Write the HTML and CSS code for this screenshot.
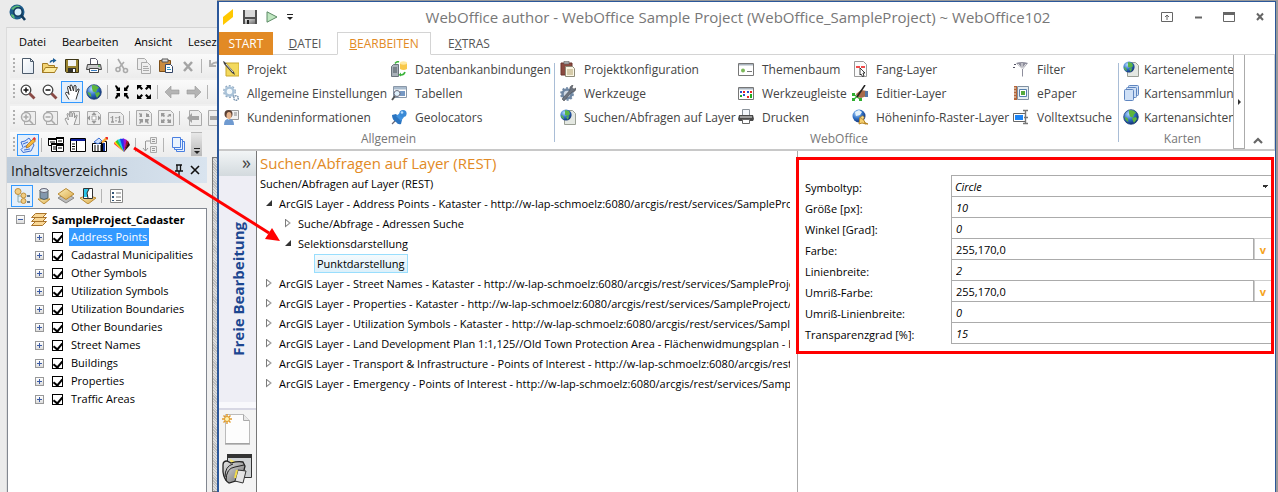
FILE: index.html
```html
<!DOCTYPE html>
<html lang="de">
<head>
  <meta charset="UTF-8">
  <meta name="viewport" content="width=device-width, initial-scale=1.0">
  <title>WebOffice author</title>
  <link rel="stylesheet" href="styles.css">
</head>
<body>

  <!-- Icon definitions -->
  <svg class="defs" aria-hidden="true">
    <defs>
      <radialGradient id="g-globe" cx=".35" cy=".3" r=".8"><stop offset="0" stop-color="#b5dcff"/><stop offset=".5" stop-color="#2f6fc4"/><stop offset="1" stop-color="#0b2566"/></radialGradient>
      <linearGradient id="g-gold" x1="0" y1="0" x2="1" y2="1"><stop offset="0" stop-color="#fdf0b8"/><stop offset="1" stop-color="#d9a84a"/></linearGradient>
      <linearGradient id="g-grey" x1="0" y1="0" x2="1" y2="1"><stop offset="0" stop-color="#e6e6e6"/><stop offset="1" stop-color="#6b6b6b"/></linearGradient>
      <linearGradient id="g-page" x1="0" y1="0" x2="1" y2="1"><stop offset="0" stop-color="#fff"/><stop offset="1" stop-color="#dfe8f2"/></linearGradient>
    </defs>
    <symbol id="i-app" viewBox="0 0 18 18"><circle cx="8" cy="8" r="7.5" fill="#1c5c8c"/><path d="M2 5q4-5 9-3l-2 3-4 1zM2 10l3 1 1 4q-4-2-4-5z" fill="#5cba78"/><circle cx="9" cy="8" r="4.2" fill="#d8eefa" stroke="#123a5c" stroke-width="1.5"/><path d="M12 11l4 5" stroke="#123a5c" stroke-width="2.6"/></symbol>
    <symbol id="i-new" viewBox="0 0 16 16"><path d="M2.5.5h8l3 3v12h-11z" fill="url(#g-page)" stroke="#4b5a6b"/><path d="M10.5.5v3h3" fill="none" stroke="#4b5a6b"/></symbol>
    <symbol id="i-open" viewBox="0 0 16 16"><path d="M.5 14.5v-9h5l1 2h6v7z" fill="#f3d374" stroke="#a27b22"/><path d="M.5 14.5l3-5h12l-3 5z" fill="#fdeb9f" stroke="#a27b22"/><path d="M8 4.500q1-2 3-2" fill="none" stroke="#1b5c96" stroke-width="1.500"/><path d="M11 0l3.500 2.500L11 5z" fill="#1b5c96"/></symbol>
    <symbol id="i-save" viewBox="0 0 16 16"><path d="M1.5 1.5h13v13h-12l-1-1z" fill="#9a8430" stroke="#3c3515"/><path d="M4 2h8v6H4z" fill="#f4f4f4"/><path d="M4 10h8v4H4z" fill="#33312a"/><path d="M9 11h2v3H9z" fill="#fff"/></symbol>
    <symbol id="i-print" viewBox="0 0 16 16"><path d="M4.5 6V.5h5l2 2V6" fill="#fff" stroke="#556"/><path d="M1.5 6.5h13l1 5h-15z" fill="#c9c9c9" stroke="#444"/><path d="M3.5 10.5h9v4h-9z" fill="#fff" stroke="#444"/><path d="M5 12.5h6" stroke="#3b7ec4"/><path d="M12 8h2" stroke="#3a3"/></symbol>
    <symbol id="i-cut" viewBox="0 0 16 16"><g fill="none" stroke="#aaa" stroke-width="1.6"><path d="M4 1l6 10M10 4l-5 6"/><circle cx="11.5" cy="12.5" r="2"/><circle cx="4" cy="11.5" r="2"/></g></symbol>
    <symbol id="i-copy" viewBox="0 0 16 16"><g fill="#eee" stroke="#aaa"><path d="M1.5.5h7l2 2v9h-9z"/><path d="M5.5 4.5h6l3 3v8h-9z"/><path d="M7 8.5h5M7 10.5h6M7 12.5h6"/></g></symbol>
    <symbol id="i-paste" viewBox="0 0 16 16"><path d="M1.5 2.5h11v11h-11z" fill="#c98b3e" stroke="#7c4d16"/><path d="M4 1h6v3H4z" fill="#ddd" stroke="#555"/><path d="M7.5 6.5h5l2 2v6h-7z" fill="#fff" stroke="#346"/><path d="M9 9.5h3M9 11.5h4" stroke="#39c"/></symbol>
    <symbol id="i-del" viewBox="0 0 16 16"><path d="M4 4l8 9M12 4l-8 9" stroke="#a4a4a4" stroke-width="2.5"/></symbol>
    <symbol id="i-undo" viewBox="0 0 16 16"><path d="M2 2v6h6M3 7q5-5 10 0v6" fill="none" stroke="#b0b0b0" stroke-width="2"/></symbol>
    <symbol id="i-zin" viewBox="0 0 16 16"><circle cx="6" cy="6" r="4.8" fill="#fff" stroke="#444" stroke-width="1.3"/><path d="M3.5 6h5M6 3.5v5" stroke="#111" stroke-width="1.5"/><path d="M9.5 9.5l5 5" stroke="#8a4a45" stroke-width="2.8"/></symbol>
    <symbol id="i-zout" viewBox="0 0 16 16"><circle cx="6" cy="6" r="4.8" fill="#fff" stroke="#444" stroke-width="1.3"/><path d="M3.5 6h5" stroke="#111" stroke-width="1.5"/><path d="M9.5 9.5l5 5" stroke="#8a4a45" stroke-width="2.8"/></symbol>
    <symbol id="i-hand" viewBox="0 0 16 16"><path d="M5 15.5L1.500 9.500q0-2 2-1l1.500 2-1.500-7q0-1.500 1.500-1L7 7 6 2q.5-2 2-.5L9.500 7 10 2q1-1.500 2 0v6l2-3q1.500-.5 1 1l-2 6-1 3.500" fill="#fff" stroke="#333"/></symbol>
    <symbol id="i-globe" viewBox="0 0 16 16"><circle cx="8" cy="8" r="7.300" fill="url(#g-globe)" stroke="#1f4178" stroke-width=".8"/><path d="M6 1l4 .5 3 2-2 2-1 3-3-1-1-3zM9 9l4-1 1 2-3 4-1-2zM1.500 8l3 1 1 4q-3-1-4-5z" fill="#5db53c"/></symbol>
    <symbol id="i-in4" viewBox="0 0 16 16"><path d="M1 2l1-1 3 3 1-1v4H2l1-1zM15 2l-1-1-3 3-1-1v4h4l-1-1zM1 14l1 1 3-3 1 1V9H2l1 1zM15 14l-1 1-3-3-1 1V9h4l-1 1z"/></symbol>
    <symbol id="i-out4" viewBox="0 0 16 16"><path d="M1 1h5L4.800 2.200 7 4.500 5.500 6 3.200 3.800 1 6zM15 1h-5l1.200 1.200L9 4.500 10.500 6l2.300-2.200L15 6zM1 15h5l-1.200-1.200L7 11.500 5.500 10l-2.300 2.200L1 10zM15 15h-5l1.200-1.200L9 11.500l1.500-1.500 2.300 2.200L15 10z"/></symbol>
    <symbol id="i-left" viewBox="0 0 16 16"><path d="M1 8l6-6v4h8v4H7v4z" fill="#b4b4b4" stroke="#999" stroke-width=".6"/></symbol>
    <symbol id="i-right" viewBox="0 0 16 16"><path d="M15 8L9 2v4H1v4h8v4z" fill="#b4b4b4" stroke="#999" stroke-width=".6"/></symbol>
    <symbol id="i-select" viewBox="0 0 16 16"><path d="M8 3h7v9H8" fill="#fff" stroke="#111" stroke-width="2"/><path d="M8 2v12" stroke="#111" stroke-width="2"/></symbol>
    <symbol id="i-pzin" viewBox="0 0 16 16"><path d="M4.5 1.5h11v13h-11z" fill="#eee" stroke="#aaa"/><circle cx="6" cy="7" r="4.5" fill="#f2f2f2" stroke="#aaa" stroke-width="1.5"/><path d="M3.5 7h5M6 4.5v5M9 10l4 4" stroke="#aaa" stroke-width="1.6"/></symbol>
    <symbol id="i-pzout" viewBox="0 0 16 16"><path d="M4.5 1.5h11v13h-11z" fill="#eee" stroke="#aaa"/><circle cx="6" cy="7" r="4.5" fill="#f2f2f2" stroke="#aaa" stroke-width="1.5"/><path d="M3.5 7h5M9 10l4 4" stroke="#aaa" stroke-width="1.6"/></symbol>
    <symbol id="i-phand" viewBox="0 0 16 16"><path d="M5.5 1.5h10v13h-10z" fill="#eee" stroke="#aaa"/><path d="M4 15L1 9q1-2 2-.5L4.500 10 3 4q1-1.500 1.500 0L6 7V3q1-1.500 2 0v4l1-4q1-1 1.500 0V8l2-3q1 0 .5 1l-2 6-1 3" fill="#f4f4f4" stroke="#999"/></symbol>
    <symbol id="i-pfull" viewBox="0 0 16 16"><path d="M1.500 1.500h10l3 3v10h-13z" fill="#eee" stroke="#aaa"/><path d="M8 2l2.500 3h-5zM8 14l2.500-3h-5zM1 8l3-2.500v5zM15 8l-3-2.500v5z" fill="#999"/><path d="M6 6h4v4H6z" fill="#fff" stroke="#aaa"/></symbol>
    <symbol id="i-p11" viewBox="0 0 16 16"><path d="M.5 2.5h12l3 3v9H.5z" fill="#eee" stroke="#aaa"/><path d="M4.500 6v6M11.500 6v6M2.500 7.500l2-1M9.500 7.500l2-1M3 12h3M10 12h3M8 7v1.500M8 10v1.500" stroke="#999" stroke-width="1.300"/></symbol>
    <symbol id="i-pin4" viewBox="0 0 16 16"><path d="M.5.5h12l3 3v12H.5z" fill="#eee" stroke="#aaa"/><path d="M3 3h1l1 1 1-1v4H3l1-1zM13 4h-1l-2-1v4h4l-1-1zM3 13l1-1-1-3h4v4l-1-1-2 2zM13 13l-1-1 1-3H9v4l1-1 2 2z" fill="#999"/></symbol>
    <symbol id="i-pout4" viewBox="0 0 16 16"><path d="M.5.5h12l3 3v12H.5z" fill="#eee" stroke="#aaa"/><path d="M3 3h4L6 4l1 2-1 1-2-1-1 1zM13 4h-3l1 1-2 1 1 1 2-1 1 1zM3 13h4l-1-1 1-2-1-1-2 1-1-1zM13 13H9l1-1-1-2 1-1 2 1 1-1z" fill="#999"/></symbol>
    <symbol id="i-pleft" viewBox="0 0 16 16"><path d="M3.500.5h9l3 3v12h-12z" fill="#eee" stroke="#aaa"/><path d="M1 8l5-5v3h7v4H6v3z" fill="#a4a4a4"/></symbol>
    <symbol id="i-pright" viewBox="0 0 16 16"><path d="M.5.5h12v15H.5z" fill="#eee" stroke="#aaa"/><path d="M14 8L9 3v3H2v4h7v3z" fill="#a4a4a4"/></symbol>
    <symbol id="i-edit" viewBox="0 0 16 16"><path d="M1 5l4-1 4-3 5 7-3 6-8 1.500-2-3 2-2z" fill="#d6e5fc" stroke="#3b6fd4"/><path d="M3 7l5-2M4 10l4-2M4 13l6-1" stroke="#3b6fd4"/><path d="M6 11l1-3 6-6 2.500 2-6.500 6z" fill="#f6b93b" stroke="#a86510" stroke-width=".7"/><path d="M12.500 1.500L14.500 0 16 2l-1 1.500z" fill="#e33"/></symbol>
    <symbol id="i-tiles" viewBox="0 0 16 16"><g fill="#fff" stroke="#000"><path d="M.5 1.500h8v7h-8z"/><path d="M8.500.5h7v6h-7z"/><path d="M3.500 6.500h6v8h-6z"/><path d="M8.500 7.500h7v7h-7z"/></g><path d="M0 2h8M8 1h8M3 7h6M8 8h8" stroke="#000" stroke-width="2"/><path d="M2 5h5M10 4h4M5 10h3M5 12h3M10 11h4" stroke="#000"/></symbol>
    <symbol id="i-form" viewBox="0 0 16 16"><path d="M.5 1.500h15v13H.5z" fill="#fff" stroke="#000"/><path d="M1 2h14v2H1z" fill="#0a1a9a"/><path d="M6.500 4v10M2 7h3M2 9.500h3M2 12h3" stroke="#000"/></symbol>
    <symbol id="i-attr" viewBox="0 0 16 16"><path d="M.5 6.500h10v8H.5zM9.500 4.500h5v10h-5z" fill="#fff" stroke="#000"/><path d="M2 9h7M2 11h7M2 13h7" stroke="#000" stroke-dasharray="2 1"/><path d="M12 6v8" stroke="#139" stroke-width="2"/><path d="M2 5l5-4 3 3-4 3z" fill="#cfe0fb" stroke="#3b6fd4"/><path d="M9 5l5-5 2 2-5 4z" fill="#f6a93b"/><path d="M14 0l2 2" stroke="#e22" stroke-width="2"/></symbol>
    <symbol id="i-fan" viewBox="0 0 16 16"><path d="M10 15L0 7l.5-2z" fill="#f33"/><path d="M10 15L.5 6 2 4z" fill="#ffd500"/><path d="M10 15L1.500 4.500 4 2.500z" fill="#32c832"/><path d="M10 15L3.500 3 7 1.500z" fill="#19c5e8"/><path d="M10 15L6 2l4-.5z" fill="#2233f0"/><path d="M10 15L9.500 1.500 13 3z" fill="#a013d3"/><path d="M10 15l2.500-12L15 5z" fill="#a01030"/><path d="M10 15l4.500-10L16 8z" fill="#2a1010"/></symbol>
    <symbol id="i-sort" viewBox="0 0 16 16"><path d="M3.500 4v10M1 11l2.500 3L6 11" fill="none" stroke="#999"/><path d="M4 4h4" stroke="#999"/><path d="M8.500.5h6v6h-6zM8.500 9.500h6v6h-6z" fill="#eee" stroke="#aaa"/><path d="M10 2.500h3M10 4.500h3M10 11.500h3M10 13.500h3" stroke="#999"/></symbol>
    <symbol id="i-stack" viewBox="0 0 16 16"><g fill="#eaf3fe" stroke="#4a7fe0"><path d="M6.500 4.500h8v10h-8z"/><path d="M4.500 2.500h8v10h-8z"/><path d="M2.500.5h8v10h-8z"/></g></symbol>
    <symbol id="i-pin" viewBox="0 0 12 12"><path d="M3 1h6M4 1v6M7.500 1v6M2 7h8M6 7v4" stroke="#111" stroke-width="1.3" fill="none"/></symbol>
    <symbol id="i-x" viewBox="0 0 12 12"><path d="M2 2l8 8M10 2l-8 8" stroke="#111" stroke-width="1.6"/></symbol>
    <symbol id="i-toc1" viewBox="0 0 16 16"><path d="M4 5v9h4M4 8h4" fill="none" stroke="#8aa"/><circle cx="4" cy="3.500" r="3" fill="#f0cd85" stroke="#c08f3c"/><circle cx="9.500" cy="7.500" r="2.500" fill="#f0cd85" stroke="#c08f3c"/><circle cx="9.500" cy="13" r="2.500" fill="#f0cd85" stroke="#c08f3c"/><path d="M13 8h3M13 14h3" stroke="#357" stroke-width="1.500"/></symbol>
    <symbol id="i-toc2" viewBox="0 0 16 16"><path d="M2 11h12l-6 5z" fill="url(#g-gold)" stroke="#b98a34"/><path d="M4 2v8q4 3 8 0V2z" fill="#8398ae" stroke="#566"/><ellipse cx="8" cy="2.500" rx="4" ry="2" fill="#dce6ef" stroke="#667"/></symbol>
    <symbol id="i-toc3" viewBox="0 0 16 16"><path d="M0 10l8-5 8 5-8 5z" fill="#bbb" stroke="#888"/><path d="M0 6l8-5.500L16 6l-8 5.500z" fill="url(#g-gold)" stroke="#b98a34"/></symbol>
    <symbol id="i-toc4" viewBox="0 0 16 16"><path d="M0 10l8-3 8 3-8 6z" fill="url(#g-gold)" stroke="#b98a34"/><path d="M3.500.5h9v10h-9z" fill="#fff" stroke="#333"/><path d="M4 1h5l-2 4 1 4H4z" fill="#2bc5e8"/><path d="M9 1L7 5l1 5" fill="none" stroke="#222"/></symbol>
    <symbol id="i-toc5" viewBox="0 0 16 16"><path d="M2.500 1.500h12v13h-12z" fill="#fff" stroke="#888"/><path d="M4 4h2v2H4zM4 8h2v2H4zM4 12h2v1H4z" fill="#357"/><path d="M8 5h5M8 9h5M8 12.500h5" stroke="#777"/></symbol>
    <symbol id="i-layers" viewBox="0 0 16 16"><g fill="#f9d795" stroke="#a9742c"><path d="M.5 14.500l4-4h11l-4 4z"/><path d="M.5 10.500l4-4h11l-4 4z"/><path d="M.5 6.500l4-4h11l-4 4z"/></g></symbol>
    <symbol id="i-logo" viewBox="0 0 12 16"><path d="M1 8l10-8v8L1 16z" fill="#ffc800"/></symbol>
    <symbol id="i-disk" viewBox="0 0 16 16"><path d="M1 1h14v14H1z" fill="#505050"/><path d="M3 1h10v7H3z" fill="#d9d9d9"/><path d="M3 10h10v5H3z" fill="url(#g-grey)"/><path d="M5 11h2v4H5z" fill="#222"/></symbol>
    <symbol id="i-play" viewBox="0 0 12 12"><path d="M1 .8l10 5.200-10 5.200z" fill="#bfe6c0" stroke="#5d8a66"/></symbol>
    <symbol id="i-more" viewBox="0 0 8 8"><path d="M1 1.500h6" stroke="#222"/><path d="M1 4h6L4 7z" fill="#222"/></symbol>
    <symbol id="i-r1" viewBox="0 0 16 16"><path d="M3 2h13v13H3z" fill="#f3d95c" stroke="#c9a72c"/><path d="M0 0l2 1 9 10 1 3-3-2L1 3z" fill="#444"/><path d="M3 3l7 8" stroke="#ddd"/></symbol>
    <symbol id="i-r2" viewBox="0 0 16 16"><circle cx="6.500" cy="6.500" r="4" fill="#f4f9fc" stroke="#a9c2d8" stroke-width="2.500"/><circle cx="6.500" cy="6.500" r="5.800" fill="none" stroke="#91abc4" stroke-width="1.300" stroke-dasharray="2 1.700"/><circle cx="13" cy="13" r="2.300" fill="#fff" stroke="#7e98b2" stroke-width="1.600" stroke-dasharray="1.500 .7"/></symbol>
    <symbol id="i-r3" viewBox="0 0 16 16"><path d="M6.500 1.500h9v9h-9z" fill="#f3f3f3" stroke="#999"/><path d="M11 4h3M11 6h3" stroke="#888"/><circle cx="5.500" cy="5" r="4" fill="#5b4033"/><ellipse cx="6" cy="6.500" rx="2.500" ry="3.500" fill="#e8b48c"/><path d="M1 16q0-6 4-6l1 1 2-1q3 1 3 6z" fill="#6f9ad0"/></symbol>
    <symbol id="i-r4" viewBox="0 0 16 16"><path d="M.5 5.500l2-2h5v12h-7z" fill="#a8b0b8" stroke="#6a737c"/><path d="M2 7h4M2 9h4M2 11h4" stroke="#4b545c"/><path d="M9 2v6q3.500 2 7 0V2z" fill="#f8c84a"/><ellipse cx="12.500" cy="2" rx="3.500" ry="1.700" fill="#ffe9a0"/><path d="M4 2.500q2-2.500 4-1.500M10 14q3 0 4-3" fill="none" stroke="#3cb43c" stroke-width="1.600"/><path d="M10 11.500v4L7.500 14z" fill="#3cb43c"/></symbol>
    <symbol id="i-r5" viewBox="0 0 16 16"><path d="M2.500 1.500h13v11h-13z" fill="#fff" stroke="#8a98a8"/><path d="M3 2h12v2.500H3z" fill="#a9bbcd"/><path d="M9 6h5v5H9z" fill="#7799c4"/><circle cx="6" cy="8.500" r="3" fill="#dff0fb" stroke="#667"/><path d="M4 11l-3 4" stroke="#555" stroke-width="1.800"/></symbol>
    <symbol id="i-r6" viewBox="0 0 16 16"><path d="M7 9L1 15" stroke="#667" stroke-width="1.200"/><path d="M1 6l4-1 6 6-1 4q-3 1-5-2-4-2-4-7z" fill="#2a74c0"/><path d="M5 7l4-3 4 4-3 4z" fill="#3f92e0"/><circle cx="12" cy="4.500" r="3.600" fill="#3a8ad6"/><circle cx="11" cy="3.500" r="1.300" fill="#b5dcff"/></symbol>
    <symbol id="i-r7" viewBox="0 0 16 16"><path d="M1 2h11v12H1z" fill="#8a4b40" stroke="#6a352c"/><path d="M4 0h5v3H4z" fill="#aaa" stroke="#666" stroke-width=".6"/><path d="M5.500 5.500h7l2 2v8h-9z" fill="#fbf6e4" stroke="#8d8a78"/><path d="M7 9h6M7 11h6M7 13h6" stroke="#b0a070"/></symbol>
    <symbol id="i-r8" viewBox="0 0 16 16"><circle cx="7" cy="9" r="4.500" fill="#cfd9e4" stroke="#6f87a3" stroke-width="2.500"/><circle cx="7" cy="9" r="6" fill="none" stroke="#6f87a3" stroke-width="1.700" stroke-dasharray="2 1.800"/><path d="M2 14l8-9q-1-4 3-5l-1 3 2 1 2-1q0 4-4 4l-8 9z" fill="#6c7480" stroke="#444" stroke-width=".5"/></symbol>
    <symbol id="i-r9" viewBox="0 0 16 16"><path d="M4.500 1.500h8l3 3v11h-11z" fill="#e4e8e2" stroke="#9a9f94"/><circle cx="6" cy="6" r="5.600" fill="url(#g-globe)"/><path d="M5 1l4 1 1 3-2 2-3-1zM6 8l3-1-1 4zM1 6l2 1 1 3q-3-1-3-4z" fill="#5ab548"/></symbol>
    <symbol id="i-r10" viewBox="0 0 16 16"><path d="M.5 2.500h15v12H.5z" fill="#fff" stroke="#777"/><path d="M1 3h14v1.500H1z" fill="#aab4be"/><circle cx="5" cy="9.500" r="2" fill="#7cb85a"/><path d="M9 10.500h5" stroke="#777"/></symbol>
    <symbol id="i-r11" viewBox="0 0 16 16"><path d="M.5 2.500h15v12H.5z" fill="#fff" stroke="#777"/><path d="M1 3h14v1.500H1z" fill="#aab4be"/><path d="M2 6h2v2H2zM5 9h2v2H5zM9 6h2v2H9z" fill="#2a50d0"/><path d="M5 6h2v2H5zM9 11h2v2H9zM12 6h2v2h-2z" fill="#e22"/><path d="M2 10h2v2H2zM12 9h2v4h-2z" fill="#2a2"/></symbol>
    <symbol id="i-r12" viewBox="0 0 16 16"><path d="M4.500 6V.5h7V6" fill="#f4f8fc" stroke="#8a929a"/><path d="M1 6h14l1 4-1 2H1l-1-2z" fill="#4a4a4a"/><path d="M2 8h12" stroke="#eee"/><path d="M4.500 10.500h7v4h-7z" fill="#fff" stroke="#666"/></symbol>
    <symbol id="i-r13" viewBox="0 0 16 16"><path d="M2.500.5h9l3 3v12h-12z" fill="#fbfbfb" stroke="#999"/><path d="M4 6h4M9 6h4" stroke="#e11" stroke-width="1.400"/><path d="M8 7l5 5h-2l1 3-1.500.5L9 13l-1 1z" fill="#fff" stroke="#111" stroke-width=".8"/></symbol>
    <symbol id="i-r14" viewBox="0 0 16 16"><path d="M1 9l7 5M1 15l7-6" stroke="#3db53d" stroke-width="1.500"/><path d="M0 8h3v3H0zM0 13h3v3H0zM7 13h3v3H7z" fill="#2fae2f"/><path d="M4 9l5-4 6 1v5l-6 2-4-1z" fill="#a86a4a"/><path d="M13 6h3v6h-3z" fill="#5577a5"/><path d="M5 12l8-12" stroke="#222" stroke-width="1.500"/></symbol>
    <symbol id="i-r15" viewBox="0 0 16 16"><circle cx="7" cy="7" r="6.500" fill="url(#g-globe)"/><path d="M3 3l4-2 3 2-2 3-4 1z" fill="#e4f2fb"/><path d="M8 8l3 2 3 5-4-1-3 1z" fill="#f5cf70" stroke="#b88728"/><circle cx="10.500" cy="8.500" r="1.600" fill="#f9dd90" stroke="#b88728" stroke-width=".7"/><path d="M12 14l4 1" stroke="#b88728" stroke-width="1.500"/></symbol>
    <symbol id="i-r16" viewBox="0 0 16 16"><path d="M3 2q6-2 12 0l-5 6v7l-1 1V8z" fill="#8e8e9c"/><path d="M5 3l4 5M9 2v6M13 3L9 8" stroke="#eee"/><path d="M0 6h2v1H0zM1 3h2v1H1z" fill="#556"/></symbol>
    <symbol id="i-r17" viewBox="0 0 16 16"><path d="M1 1h3v14H1z" fill="#b5653a"/><path d="M4.500 1.500h11v13h-11z" fill="#e6edf2" stroke="#8090a0"/><path d="M6.500 4.500h7v7h-7z" fill="#fff" stroke="#557fae"/><path d="M8 6h4v4H8z" fill="#55aa3c"/><path d="M1 3h2M1 6h2M1 9h2M1 12h2" stroke="#eed"/></symbol>
    <symbol id="i-r18" viewBox="0 0 16 16"><path d="M.5 4.500h12v8H.5z" fill="#fff" stroke="#666"/><path d="M2 6h8v5H2z" fill="#1c84f5"/><path d="M12.500 2v12M10 1.500h2l.5.5.5-.5h2M10 14.500h5M11 8.500h4" fill="none" stroke="#777" stroke-width="1.400"/></symbol>
    <symbol id="i-r19" viewBox="0 0 16 16"><g fill="#cfe0f6" stroke="#5f86c0"><rect x="5.500" y=".5" width="10" height="10" rx="1"/><rect x="3.500" y="2.500" width="10" height="10" rx="1"/><rect x="1.500" y="4.500" width="9" height="11" rx="1"/></g></symbol>
    <symbol id="i-ribmin" viewBox="0 0 12 12"><path d="M.5 1.500h11v9H.5z" fill="none" stroke="#666"/><path d="M6 9V4M4 6l2-2 2 2" fill="none" stroke="#666"/></symbol>
    <symbol id="i-min" viewBox="0 0 12 12"><path d="M3 6.500h7" stroke="#666" stroke-width="2"/></symbol>
    <symbol id="i-max" viewBox="0 0 12 12"><path d="M.5 1.500h11v9H.5z" fill="none" stroke="#666"/><path d="M0 2.500h12" stroke="#666" stroke-width="3"/></symbol>
    <symbol id="i-close" viewBox="0 0 12 12"><path d="M3 2.500l6 6.500M9 2.500L3 9" stroke="#666" stroke-width="2"/></symbol>
    <symbol id="i-up" viewBox="0 0 12 12"><path d="M2 9l4-4 4 4" fill="none" stroke="#666" stroke-width="2.200"/></symbol>
    <symbol id="i-page" viewBox="0 0 30 34"><path d="M3.500 1.500h18l6 6v23h-24z" fill="#fdfdfd" stroke="#bbb"/><path d="M21.500 1.500v6h6" fill="#e8e8e8" stroke="#aaa"/><path d="M3 31h25" stroke="#888"/><path d="M5 1v10M0 6h10M1.500 2.500l7 7M8.500 2.500l-7 7" stroke="#e09a2c" stroke-width="1.400"/><circle cx="5" cy="6" r="2.500" fill="#fff3b0" stroke="#e09a2c"/></symbol>
    <symbol id="i-folders" viewBox="0 0 30 34"><path d="M5.500 3.500h24v23h-24z" fill="#cfd2d4" stroke="#333"/><path d="M5 3h25v4H5z" fill="#333"/><path d="M8 8l6 3-5 4z" fill="#f5e36a"/><path d="M1 14q0-4 4-4l4 2q7-2 12-1l2 4-3 13-13 4q-5-3-6-11z" fill="url(#g-grey)" stroke="#222" stroke-width="1.300"/><path d="M4 30q0-13 9-14l9-2M3 26q0-11 8-13" fill="none" stroke="#222"/><path d="M16 19l8 1-3 12-8-2z" fill="#e4e4e4" stroke="#333"/><path d="M15 19l-2 8" stroke="#f3dc4c" stroke-width="2"/></symbol>
  </svg>

  <!-- ArcMap window -->
  <div class="arcmap">
    <div class="arcmap-title"><svg class="ic18"><use href="#i-app"/></svg></div>
    <div class="arcmap-body">
      <nav class="menubar">
        <button>Datei</button><button>Bearbeiten</button><button>Ansicht</button><button>Lesez</button>
      </nav>
      <div class="toolbar">
        <span class="grip"></span>
        <button aria-label="Neu"><svg><use href="#i-new"/></svg></button>
        <button aria-label="Öffnen"><svg><use href="#i-open"/></svg></button>
        <button aria-label="Speichern"><svg><use href="#i-save"/></svg></button>
        <button aria-label="Drucken"><svg><use href="#i-print"/></svg></button>
        <span class="sep"></span>
        <button aria-label="Ausschneiden"><svg><use href="#i-cut"/></svg></button>
        <button aria-label="Kopieren"><svg><use href="#i-copy"/></svg></button>
        <button aria-label="Einfügen"><svg><use href="#i-paste"/></svg></button>
        <button aria-label="Löschen"><svg><use href="#i-del"/></svg></button>
        <span class="sep"></span>
        <button aria-label="Rückgängig"><svg><use href="#i-undo"/></svg></button>
      </div>
      <div class="toolbar">
        <span class="grip"></span>
        <button aria-label="Vergrößern"><svg><use href="#i-zin"/></svg></button>
        <button aria-label="Verkleinern"><svg><use href="#i-zout"/></svg></button>
        <button class="active" aria-label="Verschieben"><svg><use href="#i-hand"/></svg></button>
        <button aria-label="Volle Ausdehnung"><svg><use href="#i-globe"/></svg></button>
        <span class="sep"></span>
        <button aria-label="Fest vergrößern"><svg><use href="#i-in4"/></svg></button>
        <button aria-label="Fest verkleinern"><svg><use href="#i-out4"/></svg></button>
        <span class="sep"></span>
        <button aria-label="Zurück"><svg><use href="#i-left"/></svg></button>
        <button aria-label="Vor"><svg><use href="#i-right"/></svg></button>
        <span class="sep"></span>
        <button aria-label="Auswählen"><svg><use href="#i-select"/></svg></button>
      </div>
      <div class="toolbar">
        <span class="grip"></span>
        <button aria-label="Seite vergrößern"><svg><use href="#i-pzin"/></svg></button>
        <button aria-label="Seite verkleinern"><svg><use href="#i-pzout"/></svg></button>
        <button aria-label="Seite verschieben"><svg><use href="#i-phand"/></svg></button>
        <button aria-label="Ganze Seite"><svg><use href="#i-pfull"/></svg></button>
        <button aria-label="100%"><svg><use href="#i-p11"/></svg></button>
        <span class="sep"></span>
        <button aria-label="Seite fest vergrößern"><svg><use href="#i-pin4"/></svg></button>
        <button aria-label="Seite fest verkleinern"><svg><use href="#i-pout4"/></svg></button>
        <span class="sep"></span>
        <button aria-label="Vorherige Seite"><svg><use href="#i-pleft"/></svg></button>
        <button aria-label="Nächste Seite"><svg><use href="#i-pright"/></svg></button>
      </div>
      <div class="toolbar toolbar-short">
        <span class="grip"></span>
        <button class="active" aria-label="Projekt bearbeiten"><svg><use href="#i-edit"/></svg></button>
        <span class="sep"></span>
        <button aria-label="Fenster"><svg><use href="#i-tiles"/></svg></button>
        <button aria-label="Formular"><svg><use href="#i-form"/></svg></button>
        <button aria-label="Attribute"><svg><use href="#i-attr"/></svg></button>
        <button aria-label="Farben"><svg><use href="#i-fan"/></svg></button>
        <span class="sep"></span>
        <button aria-label="Sortieren"><svg><use href="#i-sort"/></svg></button>
        <span class="sep"></span>
        <button aria-label="Layer"><svg><use href="#i-stack"/></svg></button>
        <button class="overflow" aria-label="Weitere"><svg><use href="#i-more"/></svg></button>
      </div>

      <div class="dock">
        <section class="toc">
          <header class="toc-head">
            <h2>Inhaltsverzeichnis</h2>
            <button aria-label="Anheften"><svg><use href="#i-pin"/></svg></button>
            <button aria-label="Schließen"><svg><use href="#i-x"/></svg></button>
          </header>
          <div class="toolbar toc-tools">
            <button class="active" aria-label="Nach Zeichenreihenfolge"><svg><use href="#i-toc1"/></svg></button>
            <button aria-label="Nach Quelle"><svg><use href="#i-toc2"/></svg></button>
            <button aria-label="Nach Sichtbarkeit"><svg><use href="#i-toc3"/></svg></button>
            <button aria-label="Nach Auswahl"><svg><use href="#i-toc4"/></svg></button>
            <span class="sep"></span>
            <button aria-label="Optionen"><svg><use href="#i-toc5"/></svg></button>
          </div>
          <div class="toc-tree">
            <div class="toc-root"><button class="exp open" aria-label="Zuklappen"></button><svg><use href="#i-layers"/></svg><b>SampleProject_Cadaster</b></div>
            <ul>
              <li><button class="exp" aria-label="Aufklappen"></button><input type="checkbox" id="l1" checked><label for="l1" class="sel">Address Points</label></li>
              <li><button class="exp" aria-label="Aufklappen"></button><input type="checkbox" id="l2" checked><label for="l2">Cadastral Municipalities</label></li>
              <li><button class="exp" aria-label="Aufklappen"></button><input type="checkbox" id="l3" checked><label for="l3">Other Symbols</label></li>
              <li><button class="exp" aria-label="Aufklappen"></button><input type="checkbox" id="l4" checked><label for="l4">Utilization Symbols</label></li>
              <li><button class="exp" aria-label="Aufklappen"></button><input type="checkbox" id="l5" checked><label for="l5">Utilization Boundaries</label></li>
              <li><button class="exp" aria-label="Aufklappen"></button><input type="checkbox" id="l6" checked><label for="l6">Other Boundaries</label></li>
              <li><button class="exp" aria-label="Aufklappen"></button><input type="checkbox" id="l7" checked><label for="l7">Street Names</label></li>
              <li><button class="exp" aria-label="Aufklappen"></button><input type="checkbox" id="l8" checked><label for="l8">Buildings</label></li>
              <li><button class="exp" aria-label="Aufklappen"></button><input type="checkbox" id="l9" checked><label for="l9">Properties</label></li>
              <li><button class="exp" aria-label="Aufklappen"></button><input type="checkbox" id="l10" checked><label for="l10">Traffic Areas</label></li>
            </ul>
          </div>
        </section>
        <div class="map-edge"></div>
      </div>
    </div>
  </div>

  <!-- WebOffice author window -->
  <div class="author">
    <header class="titlebar">
      <div class="quick">
        <svg class="logo"><use href="#i-logo"/></svg>
        <button aria-label="Speichern"><svg><use href="#i-disk"/></svg></button>
        <button aria-label="Ausführen"><svg class="ic12"><use href="#i-play"/></svg></button>
        <button aria-label="Anpassen"><svg class="ic8"><use href="#i-more"/></svg></button>
      </div>
      <h1>WebOffice author - WebOffice Sample Project (WebOffice_SampleProject) ~ WebOffice102</h1>
      <div class="winbtns">
        <button aria-label="Menüband"><svg><use href="#i-ribmin"/></svg></button>
        <button aria-label="Minimieren"><svg><use href="#i-min"/></svg></button>
        <button aria-label="Maximieren"><svg><use href="#i-max"/></svg></button>
        <button aria-label="Schließen"><svg><use href="#i-close"/></svg></button>
      </div>
    </header>
    <nav class="tabs">
      <button class="start">START</button>
      <button><u>D</u>ATEI</button>
      <button class="current"><u>B</u>EARBEITEN</button>
      <button>E<u>X</u>TRAS</button>
      <span class="tabs-rest"></span>
    </nav>
    <div class="ribbon">
      <div class="groups">
        <section class="group allgemein">
          <div class="cmds">
            <button><svg><use href="#i-r1"/></svg>Projekt</button>
            <button><svg><use href="#i-r2"/></svg>Allgemeine Einstellungen</button>
            <button><svg><use href="#i-r3"/></svg>Kundeninformationen</button>
            <button><svg><use href="#i-r4"/></svg>Datenbankanbindungen</button>
            <button><svg><use href="#i-r5"/></svg>Tabellen</button>
            <button><svg><use href="#i-r6"/></svg>Geolocators</button>
          </div>
          <h3>Allgemein</h3>
        </section>
        <section class="group weboffice">
          <div class="cmds">
            <button><svg><use href="#i-r7"/></svg>Projektkonfiguration</button>
            <button><svg><use href="#i-r8"/></svg>Werkzeuge</button>
            <button><svg><use href="#i-r9"/></svg>Suchen/Abfragen auf Layer</button>
            <button><svg><use href="#i-r10"/></svg>Themenbaum</button>
            <button><svg><use href="#i-r11"/></svg>Werkzeugleiste</button>
            <button><svg><use href="#i-r12"/></svg>Drucken</button>
            <button><svg><use href="#i-r13"/></svg>Fang-Layer</button>
            <button><svg><use href="#i-r14"/></svg>Editier-Layer</button>
            <button><svg><use href="#i-r15"/></svg>Höheninfo-Raster-Layer</button>
            <button><svg><use href="#i-r16"/></svg>Filter</button>
            <button><svg><use href="#i-r17"/></svg>ePaper</button>
            <button><svg><use href="#i-r18"/></svg>Volltextsuche</button>
          </div>
          <h3>WebOffice</h3>
        </section>
        <section class="group karten">
          <div class="cmds">
            <button><svg><use href="#i-r9"/></svg>Kartenelemente</button>
            <button><svg><use href="#i-r19"/></svg>Kartensammlung</button>
            <button><svg><use href="#i-globe"/></svg>Kartenansichten</button>
          </div>
          <h3>Karten</h3>
        </section>
      </div>
      <button class="scroll" aria-label="Weiter"></button>
      <button class="collapse" aria-label="Menüband reduzieren"><svg class="ic12"><use href="#i-up"/></svg></button>
    </div>

    <main class="work">
      <aside class="rail">
        <button class="rail-toggle" aria-label="Erweitern">»</button>
        <div class="rail-name"><span>Freie Bearbeitung</span></div>
        <div class="rail-btns">
          <button aria-label="Neues Projekt"><svg><use href="#i-page"/></svg></button>
          <button aria-label="Projekte öffnen"><svg><use href="#i-folders"/></svg></button>
        </div>
      </aside>
      <section class="layers">
        <h2>Suchen/Abfragen auf Layer (REST)</h2>
        <ul>
          <li class="lv0">Suchen/Abfragen auf Layer (REST)</li>
          <li class="lv1 open">ArcGIS Layer - Address Points - Kataster - http://w-lap-schmoelz:6080/arcgis/rest/services/SampleProje</li>
          <li class="lv2 shut">Suche/Abfrage - Adressen Suche</li>
          <li class="lv2 open">Selektionsdarstellung</li>
          <li class="lv3"><span class="picked">Punktdarstellung</span></li>
          <li class="lv1 shut">ArcGIS Layer - Street Names - Kataster - http://w-lap-schmoelz:6080/arcgis/rest/services/SampleProjec</li>
          <li class="lv1 shut">ArcGIS Layer - Properties - Kataster - http://w-lap-schmoelz:6080/arcgis/rest/services/SampleProject/S</li>
          <li class="lv1 shut">ArcGIS Layer - Utilization Symbols - Kataster - http://w-lap-schmoelz:6080/arcgis/rest/services/Sample</li>
          <li class="lv1 shut">ArcGIS Layer - Land Development Plan 1:1,125//Old Town Protection Area - Flächenwidmungsplan - ht</li>
          <li class="lv1 shut">ArcGIS Layer - Transport &amp; Infrastructure - Points of Interest - http://w-lap-schmoelz:6080/arcgis/rest/s</li>
          <li class="lv1 shut">ArcGIS Layer - Emergency - Points of Interest - http://w-lap-schmoelz:6080/arcgis/rest/services/Sample</li>
        </ul>
      </section>
      <section class="props">
        <form class="props-form">
          <label for="typ">Symboltyp:</label>
          <select id="typ"><option>Circle</option></select>
          <label for="size">Größe [px]:</label>
          <input type="text" id="size" value="10">
          <label for="angle">Winkel [Grad]:</label>
          <input type="text" id="angle" value="0">
          <label for="color">Farbe:</label>
          <div class="pick"><input type="text" id="color" value="255,170,0"><button type="button" aria-label="Farbe wählen">v</button></div>
          <label for="line">Linienbreite:</label>
          <input type="text" id="line" value="2">
          <label for="ocolor">Umriß-Farbe:</label>
          <div class="pick"><input type="text" id="ocolor" value="255,170,0"><button type="button" aria-label="Umriß-Farbe wählen">v</button></div>
          <label for="oline">Umriß-Linienbreite:</label>
          <input type="text" id="oline" value="0">
          <label for="trans">Transparenzgrad [%]:</label>
          <input type="text" id="trans" value="15">
        </form>
      </section>
    </main>
  </div>

  <!-- Arrow from the toolbar to the tree -->
  <svg class="arrow" viewBox="0 0 150 100" aria-hidden="true">
    <path d="M2 3L137 88" stroke="#f00" stroke-width="3" fill="none"/>
    <path d="M148 96l-15-2 7-11z" fill="#f00"/>
  </svg>

</body>
</html>
```
FILE: styles.css
```css
* {
  box-sizing: border-box;
}
body {
  margin: 0;
  height: 100vh;
  display: flex;
  overflow: hidden;
  position: relative;
  background: #999;
  font-family: "Open Sans", "Noto Sans", sans-serif;
  font-size: 12px;
  color: #000;
}
button {
  margin: 0;
  padding: 0;
  border: none;
  background: none;
  font: inherit;
  color: inherit;
}
h1, h2, h3, ul {
  margin: 0;
  padding: 0;
  font-weight: normal;
  list-style: none;
}
svg {
  display: block;
  flex: none;
  width: 16px;
  height: 16px;
}
.defs {
  position: absolute;
  width: 0;
  height: 0;
}
.ic18 {
  width: 18px;
  height: 18px;
}
svg.ic12 {
  width: 12px;
  height: 12px;
}
svg.ic8 {
  width: 8px;
  height: 8px;
}

/* ArcMap */
.arcmap {
  flex: none;
  width: 217px;
  padding-left: 6px;
  display: flex;
  flex-direction: column;
  overflow: hidden;
  background: #ebebeb;
}
.arcmap-title {
  height: 27px;
  padding: 4px 3px;
}
.arcmap-body {
  flex: 1;
  display: flex;
  flex-direction: column;
  border-left: 1px solid #dcdcdc;
  border-top: 1px solid #d4d4d4;
  background: #f0f0f0;
}
.menubar {
  display: flex;
  gap: 16px;
  height: 26px;
  padding-left: 12px;
  font-size: 11px;
}
.toolbar {
  display: flex;
  align-items: center;
  height: 24px;
  margin: 0 0 2px 3px;
  background: linear-gradient(#fafafa, #ececec);
}
.toolbar-short {
  height: 25px;
  width: 192px;
  margin-bottom: 0;
}
.toolbar button {
  flex: none;
  width: 22px;
  height: 22px;
  border: 1px solid transparent;
  display: flex;
  align-items: center;
  justify-content: center;
}
.toolbar .active {
  border-color: #3399ff;
  background: #e4effb;
}
.toolbar .overflow {
  width: 11px;
  height: 25px;
  margin-left: 2px;
  padding-top: 12px;
  background: linear-gradient(#e8e8e8, #b8b8b8);
}
.overflow svg {
  width: 8px;
  height: 8px;
}
.grip {
  flex: none;
  width: 2px;
  height: 16px;
  margin: 0 2px 0 3px;
  background: repeating-linear-gradient(#b0b0b0 0 2px, transparent 2px 4px);
}
.sep {
  flex: none;
  width: 6px;
  height: 14px;
  border-left: 1px solid #b4b4b4;
  margin-left: 2px;
  margin-right: -2px;
}
.dock {
  flex: 1;
  display: flex;
}
.toc {
  width: 200px;
  display: flex;
  flex-direction: column;
}
.toc-head {
  height: 26px;
  padding: 0 2px 0 4px;
  display: flex;
  align-items: center;
  background: linear-gradient(90deg, #bfcddb, #d9e4ef);
}
.toc-head h2 {
  flex: 1;
  font-size: 14px;
  color: #222;
}
.toc-head button {
  width: 16px;
}
.toc-head svg {
  width: 12px;
  height: 12px;
}
.toc-tools {
  margin: 0;
  padding-left: 4px;
  height: 25px;
  background: #f0f0f0;
}
.toc-tree {
  flex: 1;
  padding: 1px 0 0 8px;
  background: #fff;
  border: 1px solid #828790;
  border-bottom: none;
  font-size: 11px;
}
.toc-root, .toc-tree li {
  display: flex;
  align-items: center;
  height: 18px;
}
.toc-root svg {
  margin: 0 5px 0 6px;
}
.toc-tree li {
  padding-left: 19px;
}
.exp {
  width: 9px;
  height: 9px;
  border: 1px solid #989898;
  background:
    linear-gradient(#3b5ba5, #3b5ba5) center / 5px 1px no-repeat,
    linear-gradient(#3b5ba5, #3b5ba5) center / 1px 5px no-repeat,
    linear-gradient(#fff, #ddd);
}
.exp.open {
  background:
    linear-gradient(#3b5ba5, #3b5ba5) center / 5px 1px no-repeat,
    linear-gradient(#fff, #ddd);
}
.toc-tree .exp::before {
  content: none;
}
.toc-tree input {
  appearance: none;
  width: 11px;
  height: 11px;
  margin: 0 6px 0 8px;
  border: 1px solid #000;
  background: #fff;
  display: flex;
  justify-content: center;
}
.toc-tree input:checked::after {
  content: "";
  width: 4px;
  height: 7px;
  border: solid #000;
  border-width: 0 2px 2px 0;
  transform: rotate(40deg);
}
.toc-tree label {
  padding: 0 2px;
  line-height: 18px;
  white-space: nowrap;
}
.toc-tree .sel {
  background: #3399ff;
  color: #fff;
}
.map-edge {
  flex: 1;
  margin-left: 5px;
  border: 1px solid #777;
  border-right: none;
  background: repeating-linear-gradient(45deg, #ddd 0 1px, #bbb 1px 2px);
}

/* WebOffice author */
.author {
  flex: 1;
  min-width: 0;
  margin: 1px 2px 0 0;
  display: flex;
  flex-direction: column;
  border: 1px solid #2b579a;
  border-left-width: 2px;
  border-bottom: none;
  background: #fff;
}
.titlebar {
  height: 30px;
  display: flex;
  align-items: center;
}
.quick {
  display: flex;
  align-items: center;
  gap: 8px;
  width: 96px;
  padding-left: 3px;
}
.quick .logo {
  width: 12px;
}
.titlebar h1 {
  flex: 1;
  text-align: center;
  font-size: 15px;
  color: #777;
  white-space: nowrap;
}
.winbtns {
  display: flex;
  gap: 19px;
  padding-right: 9px;
}
.winbtns svg {
  width: 12px;
  height: 12px;
}
.tabs {
  display: flex;
  height: 23px;
  color: #555;
}
.tabs button, .tabs-rest {
  border-bottom: 1px solid #d4d4d4;
}
.tabs button {
  width: 64px;
}
.tabs button.start {
  width: 54px;
  background: #e28a25;
  color: #fff;
  border-color: #e28a25;
}
.tabs button.current {
  width: 94px;
  border: 1px solid #d4d4d4;
  border-bottom-color: #fff;
  color: #e28a25;
}
.tabs button:nth-child(4) {
  width: 76px;
}
.tabs-rest {
  flex: 1;
}
.ribbon {
  display: flex;
  height: 96px;
  border-bottom: 2px solid #c8c8c8;
}
.groups {
  flex: 1;
  min-width: 0;
  display: flex;
  overflow: hidden;
}
.group {
  flex: none;
  padding: 2px 0 0 6px;
  color: #444;
}
.cmds {
  display: grid;
  grid-auto-flow: column;
  grid-template-rows: repeat(3, 24px);
}
.cmds button {
  display: flex;
  align-items: center;
  gap: 8px;
  white-space: nowrap;
}
.group h3 {
  font-size: 12px;
  line-height: 20px;
  text-align: center;
  color: #777;
}
.allgemein {
  width: 335px;
  padding-left: 4px;
}
.allgemein .cmds {
  grid-template-columns: 168px 160px;
}
.weboffice {
  width: 564px;
}
.weboffice .cmds {
  grid-template-columns: 178px 114px 161px 104px;
}
.karten {
  width: 124px;
  padding-left: 5px;
}
.karten .cmds button {
  gap: 5px;
}
.weboffice, .karten {
  background: linear-gradient(#a9bdd6, #a9bdd6) 0 8px / 1px 79px no-repeat;
}
.scroll {
  width: 12px;
  border: 1px solid #ababab;
  border-top: none;
  display: flex;
  align-items: center;
  justify-content: center;
}
.scroll::before {
  content: "";
  border: 3px solid transparent;
  border-left-color: #333;
  border-right-width: 0;
}
.collapse {
  width: 30px;
  padding: 0 9px 3px 7px;
  display: flex;
  align-items: flex-end;
  border-right: 1px solid #d4d4d4;
}

/* work area */
.work {
  flex: 1;
  min-height: 0;
  display: flex;
}
.rail {
  flex: none;
  width: 38px;
  display: flex;
  flex-direction: column;
  border-right: 1px solid #777;
  background: #f4f4f4;
}
.rail-toggle {
  height: 25px;
  padding: 0 5px 4px 0;
  background: linear-gradient(#f2f5f6, #d3dade);
  text-align: right;
  font-size: 18px;
  line-height: 18px;
  color: #444;
}
.rail-name {
  flex: 1;
  display: flex;
  align-items: center;
  justify-content: center;
  border-bottom: 6px solid #f9f9fc;
  background: #eeeef5;
}
.rail-name span {
  writing-mode: vertical-rl;
  transform: rotate(180deg);
  font-size: 15px;
  font-weight: bold;
  color: #1c4690;
}
.rail-btns {
  height: 84px;
  padding: 3px;
  display: flex;
  flex-direction: column;
  gap: 4px;
  border-top: 2px solid #d8d8e4;
}
.rail-btns svg {
  width: 30px;
  height: 34px;
}
.layers {
  flex: 1;
  min-width: 0;
  padding: 0 6px 0 3px;
}
.layers h2 {
  height: 22px;
  line-height: 24px;
  font-size: 15px;
  color: #e28a25;
}
.layers ul {
  overflow: hidden;
  font-size: 11px;
}
.layers li {
  display: flex;
  align-items: center;
  height: 20px;
  white-space: nowrap;
}
.lv1 {
  padding-left: 6px;
}
.lv2 {
  padding-left: 25px;
}
.lv3 {
  padding-left: 54px;
}
.layers .open::before, .layers .shut::before {
  content: "";
  flex: none;
  width: 6px;
  height: 9px;
  margin-right: 7px;
}
.layers .open::before {
  height: 6px;
  background: #333;
  clip-path: polygon(100% 0, 100% 100%, 0 100%);
}
.layers .shut::before {
  background: linear-gradient(90deg, #777, #aaa);
  clip-path: polygon(0 0, 100% 50%, 0 100%, 0 0, 1px 2px, 1px 7px, 4px 50%, 1px 2px);
}
.picked {
  padding: 0 2px;
  line-height: 17px;
  border: 1px solid #99defd;
  background: linear-gradient(#f4fafd, #dcf0fa);
}
.props {
  flex: none;
  width: 479px;
  padding: 6px 1px 0 0;
  background: linear-gradient(#aaa, #aaa) 1px 0 / 1px 100% no-repeat;
}
.props-form {
  display: grid;
  grid-template-columns: 152px 1fr;
  grid-auto-rows: 21px;
  height: 197px;
  padding-top: 15px;
  border: 3px solid #f00;
  background: #fff;
  font-size: 11px;
}
.props-form label {
  padding: 5px 0 0 6px;
  line-height: 16px;
}
.props-form input, .props-form select {
  appearance: none;
  width: 100%;
  height: 22px;
  padding: 0 4px;
  border: 1px solid #ababab;
  border-right: none;
  border-radius: 0;
  background: #fff;
  font: italic 11px "Open Sans", "Noto Sans", sans-serif;
  color: #000;
}
.props-form select {
  padding: 0 3px;
  background:
    linear-gradient(to bottom left, #333 50%, transparent 50%) right 6px center / 3px 3px no-repeat,
    linear-gradient(to bottom right, #333 50%, transparent 50%) right 3px center / 3px 3px no-repeat;
}
.pick {
  display: flex;
}
.props-form .pick input {
  flex: 1;
  width: auto;
  border-right: 1px solid #ababab;
  font-style: normal;
}
.pick button {
  width: 17px;
  height: 22px;
  border: 1px solid #ccc;
  border-right: none;
  font-weight: bold;
  color: #f5a31c;
}

.arrow {
  position: absolute;
  left: 132px;
  top: 145px;
  width: 150px;
  height: 100px;
}
```
